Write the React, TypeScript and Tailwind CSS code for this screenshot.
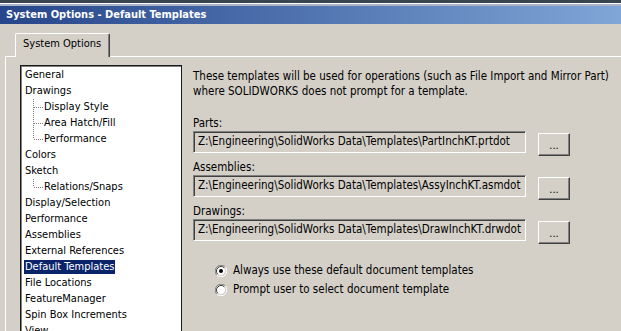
const FONT = "font-['DejaVu_Sans_Condensed','Liberation_Sans',sans-serif]";

type Item = { label: string; sub?: "mid" | "last"; selected?: boolean };

const items: Item[] = [
  { label: "General" },
  { label: "Drawings" },
  { label: "Display Style", sub: "mid" },
  { label: "Area Hatch/Fill", sub: "mid" },
  { label: "Performance", sub: "last" },
  { label: "Colors" },
  { label: "Sketch" },
  { label: "Relations/Snaps", sub: "last" },
  { label: "Display/Selection" },
  { label: "Performance" },
  { label: "Assemblies" },
  { label: "External References" },
  { label: "Default Templates", selected: true },
  { label: "File Locations" },
  { label: "FeatureManager" },
  { label: "Spin Box Increments" },
  { label: "View" },
];

function TreeLine({ last }: { last: boolean }) {
  return (
    <svg width="19" height="16" viewBox="0 0 19 16" className="shrink-0">
      <line x1="8.5" y1="0" x2="8.5" y2={last ? 8 : 16} stroke="#808080" strokeDasharray="1 1" />
      <line x1="9" y1="8.5" x2="18" y2="8.5" stroke="#808080" strokeDasharray="1 1" />
    </svg>
  );
}

function Radio({ checked }: { checked?: boolean }) {
  return (
    <svg width="12" height="12" viewBox="0 0 12 12" className="shrink-0">
      <path d="M10.24 1.76 A6 6 0 0 0 1.76 10.24" stroke="#808080" fill="none" />
      <path d="M1.76 10.24 A6 6 0 0 0 10.24 1.76" stroke="#ffffff" fill="none" />
      <circle cx="6" cy="6" r="4.5" fill="#ffffff" />
      <path d="M9.18 2.82 A4.5 4.5 0 0 0 2.82 9.18" stroke="#404040" fill="none" />
      <path d="M2.82 9.18 A4.5 4.5 0 0 0 9.18 2.82" stroke="#d4d0c8" fill="none" />
      {checked && <circle cx="6" cy="6" r="2" fill="#000000" />}
    </svg>
  );
}

function PathField({ label, value }: { label: string; value: string }) {
  return (
    <div className="flex flex-col">
      <div className="leading-[14px] h-[14px]">{label}</div>
      <div className="mt-px flex items-start">
        <div className="w-[333px] h-[22px] border border-t-[#808080] border-l-[#808080] border-b-white border-r-white shadow-[inset_1px_1px_0_#404040] flex items-center pl-[4px] overflow-hidden whitespace-nowrap">
          {value}
        </div>
        <div className="ml-[12px] mt-[2px] w-[32px] h-[23px] border border-t-white border-l-white border-b-[#404040] border-r-[#404040] shadow-[inset_-1px_-1px_0_#808080] flex items-center justify-center pt-[2px] leading-none text-[11px]">
          ...
        </div>
      </div>
    </div>
  );
}

export default function App() {
  return (
    <div className={`w-[621px] h-[331px] overflow-hidden bg-[#d4d0c8] text-[11px] text-black ${FONT}`}>
      <div className="h-[3px] bg-[#3a4550]" />
      <div className="h-px bg-white" />
      <div className="h-[2px] bg-[#aab4c4]" />
      <div className="h-[18px] bg-gradient-to-r from-[#27458a] to-[#80a6d7] flex items-center pl-[6px] text-white font-bold">
        System Options - Default Templates
      </div>

      <div className="pl-[5px] pt-[9px]">
        <div className="flex items-end">
          <div className="w-[10px] border-b border-white" />
          <div className="w-[95px] h-[24px] border-t border-l border-white border-r border-r-[#404040] shadow-[inset_-1px_0_0_#808080] rounded-t-[2px] flex items-center pl-[7px] pb-[2px]">
            System Options
          </div>
          <div className="flex-1 border-b border-white" />
        </div>

        <div className="border-l border-white h-[300px] pl-[14px] pt-[8px] flex items-start">
          <div className="w-[162px] h-[300px] shrink-0 bg-white border border-[#1a1a1a] shadow-[inset_1px_1px_0_#808080] pl-[3px] pt-px">
            {items.map((it, i) => (
              <div key={i} className="h-4 flex items-center">
                {it.sub && <div className="w-px shrink-0" />}
                {it.sub && <TreeLine last={it.sub === "last"} />}
                <span
                  className={`leading-[14px] px-px whitespace-nowrap ${
                    it.selected ? "bg-[#0a246a] text-white" : ""
                  } ${it.sub ? "-ml-[1px]" : ""}`}
                >
                  {it.label}
                </span>
              </div>
            ))}
          </div>

          <div className="ml-[11px] pt-[4px] flex flex-col text-[11.5px]">
            <div className="leading-[15px]">
              <div>These templates will be used for operations (such as File Import and Mirror Part)</div>
              <div>where SOLIDWORKS does not prompt for a template.</div>
            </div>

            <div className="mt-[17px] flex flex-col gap-[4px]">
              <PathField label="Parts:" value="Z:\Engineering\SolidWorks Data\Templates\PartInchKT.prtdot" />
              <PathField label="Assemblies:" value="Z:\Engineering\SolidWorks Data\Templates\AssyInchKT.asmdot" />
              <PathField label="Drawings:" value="Z:\Engineering\SolidWorks Data\Templates\DrawInchKT.drwdot" />
            </div>

            <div className="mt-[17px] pl-[22px] flex flex-col">
              <div className="h-[19px] flex items-center gap-[6px]">
                <Radio checked />
                <span>Always use these default document templates</span>
              </div>
              <div className="h-[19px] flex items-center gap-[6px]">
                <Radio />
                <span>Prompt user to select document template</span>
              </div>
            </div>
          </div>
        </div>
      </div>
    </div>
  );
}
